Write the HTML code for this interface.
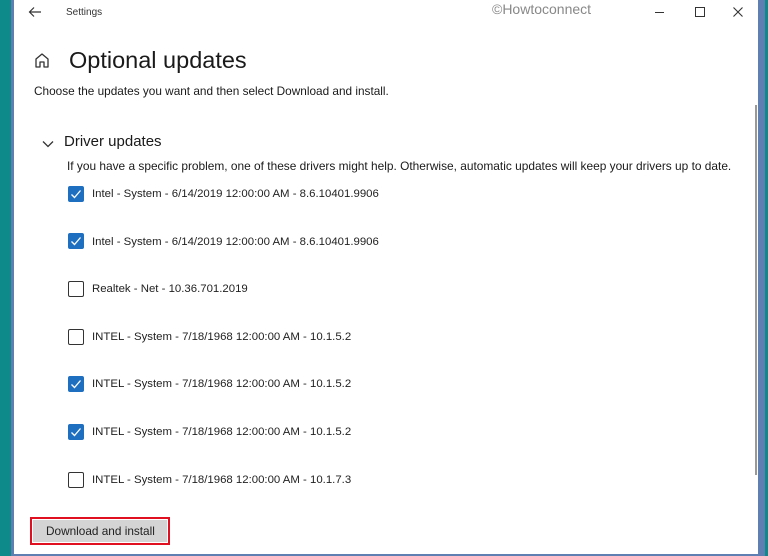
<!DOCTYPE html>
<html><head><style>
body{margin:0;width:768px;height:556px;overflow:hidden;background:#0e8a8a;font-family:"Liberation Sans",sans-serif;position:relative}
.frame{position:absolute;left:11px;top:0;width:754px;height:556px;background:#5f7fb3}
.win{position:absolute;left:14px;top:0;width:744px;height:554px;background:#fff}
.t{position:absolute;white-space:nowrap;color:#1a1a1a}
.cb{position:absolute;left:68px;width:14px;height:14px;border:1.5px solid #333;border-radius:2px;background:#fff}
.cb.on{background:#1f6fc0;border-color:#1f6fc0}
.cb.on svg{position:absolute;left:1px;top:1px}
.lbl{left:92px;font-size:11.4px;color:#222}
</style></head><body>
<div class="frame"></div>
<div class="win"></div>
<svg style="position:absolute;left:28px;top:6px" width="14" height="12"><path d="M13 6H2M6 1.5L1.5 6 6 10.5" stroke="#333" stroke-width="1.2" fill="none"/></svg>
<div class="t" style="left:66px;top:7px;font-size:10px;color:#333">Settings</div>
<div class="t" style="left:492px;top:1px;font-size:14px;color:#888">©Howtoconnect</div>
<div style="position:absolute;left:655px;top:12px;width:9px;height:1px;background:#333"></div>
<div style="position:absolute;left:695px;top:7px;width:8px;height:8px;border:1px solid #333"></div>
<svg style="position:absolute;left:733px;top:7px" width="10" height="10"><path d="M0.5 0.5L9.5 9.5M9.5 0.5L0.5 9.5" stroke="#333" stroke-width="1.1"/></svg>
<svg style="position:absolute;left:34px;top:52px" width="16" height="16"><path d="M2 15V7L8 2l6 5v8H10V10H6v5Z" stroke="#333" stroke-width="1.3" fill="none" stroke-linejoin="round"/></svg>
<div class="t" style="left:69px;top:47px;font-size:23.5px;color:#1a1a1a">Optional updates</div>
<div class="t" style="left:34px;top:84px;font-size:11.8px">Choose the updates you want and then select Download and install.</div>
<svg style="position:absolute;left:42px;top:140px" width="12" height="8"><path d="M1 1.5l5 5 5-5" stroke="#333" stroke-width="1.3" fill="none"/></svg>
<div class="t" style="left:64px;top:133px;font-size:15px">Driver updates</div>
<div class="t" style="left:67px;top:159px;font-size:11.9px">If you have a specific problem, one of these drivers might help. Otherwise, automatic updates will keep your drivers up to date.</div>
<div class="cb on" style="top:186px"><svg width="12" height="12"><path d="M1.5 6.5l3 3 6-7" stroke="#fff" stroke-width="1.3" fill="none"/></svg></div>
<div class="t lbl" style="top:188px">Intel - System - 6/14/2019 12:00:00 AM - 8.6.10401.9906</div>
<div class="cb on" style="top:233px"><svg width="12" height="12"><path d="M1.5 6.5l3 3 6-7" stroke="#fff" stroke-width="1.3" fill="none"/></svg></div>
<div class="t lbl" style="top:236px">Intel - System - 6/14/2019 12:00:00 AM - 8.6.10401.9906</div>
<div class="cb" style="top:281px"></div>
<div class="t lbl" style="top:283px">Realtek - Net - 10.36.701.2019</div>
<div class="cb" style="top:329px"></div>
<div class="t lbl" style="top:331px">INTEL - System - 7/18/1968 12:00:00 AM - 10.1.5.2</div>
<div class="cb on" style="top:376px"><svg width="12" height="12"><path d="M1.5 6.5l3 3 6-7" stroke="#fff" stroke-width="1.3" fill="none"/></svg></div>
<div class="t lbl" style="top:378px">INTEL - System - 7/18/1968 12:00:00 AM - 10.1.5.2</div>
<div class="cb on" style="top:424px"><svg width="12" height="12"><path d="M1.5 6.5l3 3 6-7" stroke="#fff" stroke-width="1.3" fill="none"/></svg></div>
<div class="t lbl" style="top:426px">INTEL - System - 7/18/1968 12:00:00 AM - 10.1.5.2</div>
<div class="cb" style="top:472px"></div>
<div class="t lbl" style="top:474px">INTEL - System - 7/18/1968 12:00:00 AM - 10.1.7.3</div>
<div style="position:absolute;left:755px;top:105px;width:2px;height:370px;background:#999"></div>
<div style="position:absolute;left:30px;top:517px;width:140px;height:28px;border:2px solid #e01020;box-sizing:border-box;background:#fff"></div>
<div style="position:absolute;left:33px;top:520px;width:134px;height:22px;background:#d4d4d4"></div>
<div class="t" style="left:46px;top:524px;font-size:11.8px;color:#222">Download and install</div>
</body></html>
